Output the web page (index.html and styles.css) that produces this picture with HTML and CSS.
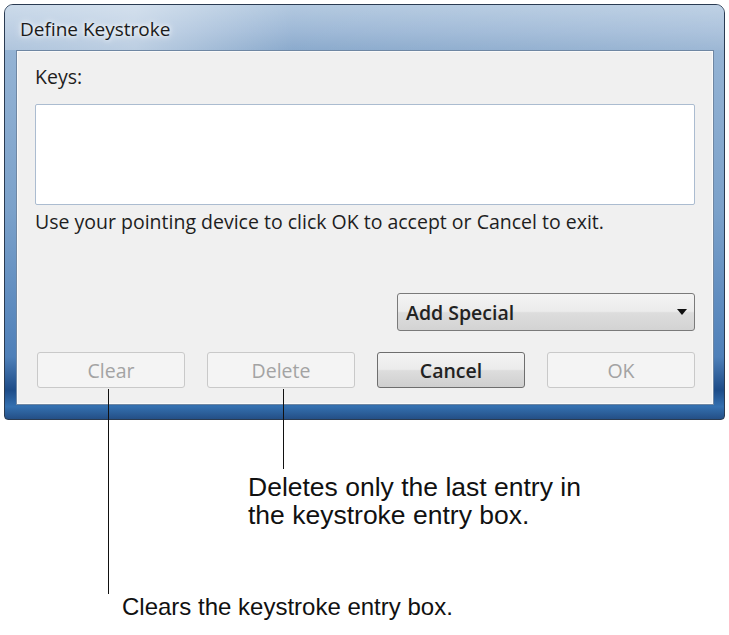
FILE: index.html
```html
<html>
  <head>
    <meta charset="utf-8">
    <link rel="stylesheet" href="styles.css">
  </head>
  <body>
    <div class="window">
      <div class="titleBar">
        <span class="title">Define Keystroke</span>
      </div>
      <div class="client">
        <p class="label">Keys:</p>
        <div class="keysBox"></div>
        <p class="hint">Use your pointing device to click OK to accept or Cancel to exit.</p>
        <div class="specialRow">
          <div class="combo">
            <span>Add Special</span>
            <svg class="arrow" width="10" height="6" viewBox="0 0 10 6"><path d="M0 0 L10 0 L5 6 Z" fill="#111"/></svg>
          </div>
        </div>
        <div class="buttons">
          <div class="btn disabled clearBtn">Clear</div>
          <div class="btn disabled deleteBtn">Delete</div>
          <div class="btn cancelBtn">Cancel</div>
          <div class="btn disabled">OK</div>
        </div>
      </div>
    </div>
    <div class="notes">
      <p class="note deleteNote">Deletes only the last entry in<br>the keystroke entry box.</p>
      <p class="note clearNote">Clears the keystroke entry box.</p>
    </div>
  </body>
</html>
```
FILE: styles.css
```css
* {
  padding: 0;
  margin: 0;
  box-sizing: border-box;
}
body {
  background-color: #fff;
  width: 729px;
  height: 635px;
  overflow: hidden;
}
.window {
  margin: 4px 0 0 4px;
  width: 721px;
  height: 416px;
  border: 1px solid #2a3b52;
  border-radius: 9px 9px 4px 4px;
  background: linear-gradient(to bottom, #a9c2dc 0%, #94b3d4 12%, #7ba1ca 50%, #4f80b9 85%, #1d4c88 93%, #3470b0 97%, #244f86 100%);
  padding: 0 10px 14px 11px;
  display: flex;
  flex-direction: column;
}
.titleBar {
  height: 45px;
  display: flex;
  align-items: center;
  margin: 0 -10px 0 -11px;
  padding-left: 15px;
  border-radius: 8px 8px 0 0;
  background: linear-gradient(to right, rgba(255,255,255,0.35) 0%, rgba(255,255,255,0.45) 18%, rgba(255,255,255,0.05) 40%, rgba(255,255,255,0.12) 70%, rgba(255,255,255,0.2) 100%),
    linear-gradient(to bottom, #afc6de 0%, #98b4d4 60%, #85a6ca 100%);
}
.title {
  font-family: "Open Sans", "Noto Sans", sans-serif;
  font-size: 19px;
  color: #1b1b1b;
  text-shadow: 0 0 8px #fff, 0 0 4px #fff;
  margin-top: 2px;
}
.client {
  flex: 1;
  background-color: #f0f0f0;
  border: 1px solid #6f87a3;
  box-shadow: inset 0 0 0 1px #fafafa;
  padding: 14px 18px 0 18px;
  font-family: "Open Sans", "Noto Sans", sans-serif;
  font-size: 19.5px;
  color: #1e1e1e;
}
.label {
  height: 24px;
  line-height: 24px;
  margin-bottom: 15px;
}
.keysBox {
  height: 101px;
  background-color: #fff;
  border: 1px solid #abbcd0;
  border-radius: 2px;
}
.hint {
  height: 24px;
  line-height: 24px;
  margin-top: 5px;
}
.specialRow {
  display: flex;
  justify-content: flex-end;
  margin-top: 59px;
}
.combo {
  width: 298px;
  height: 38px;
  border: 1px solid #7a7a7a;
  border-radius: 3px;
  background: linear-gradient(to bottom, #f4f4f4 0%, #ebebeb 48%, #dddddd 52%, #d3d3d3 100%);
  display: flex;
  align-items: center;
  justify-content: space-between;
  padding: 0 7px 0 8px;
  font-weight: 600;
  color: #222;
}
.buttons {
  display: flex;
  gap: 22px;
  margin-top: 21px;
  padding-left: 2px;
}
.btn {
  position: relative;
  width: 148px;
  height: 36px;
  display: flex;
  align-items: center;
  justify-content: center;
  border-radius: 3px;
}
.disabled {
  border: 1px solid #c9c9c9;
  background-color: #f4f4f4;
  color: #a3a3a3;
}
.cancelBtn {
  border: 1px solid #6e6e6e;
  background: linear-gradient(to bottom, #f3f3f3 0%, #ebebeb 48%, #dddddd 52%, #cfcfcf 100%);
  font-weight: 600;
  color: #222;
}
.clearBtn::after,
.deleteBtn::after {
  content: "";
  position: absolute;
  top: 36px;
  width: 1px;
  background-color: #111;
}
.clearBtn::after {
  left: 70px;
  height: 205px;
}
.deleteBtn::after {
  left: 75px;
  height: 80px;
}
.notes {
  font-family: "Liberation Sans", Arial, sans-serif;
  font-size: 24px;
  line-height: 27px;
  color: #111;
}
.deleteNote {
  font-size: 26.5px;
  line-height: 28px;
  margin: 53px 0 0 248px;
}
.clearNote {
  margin: 64px 0 0 122px;
}
```
